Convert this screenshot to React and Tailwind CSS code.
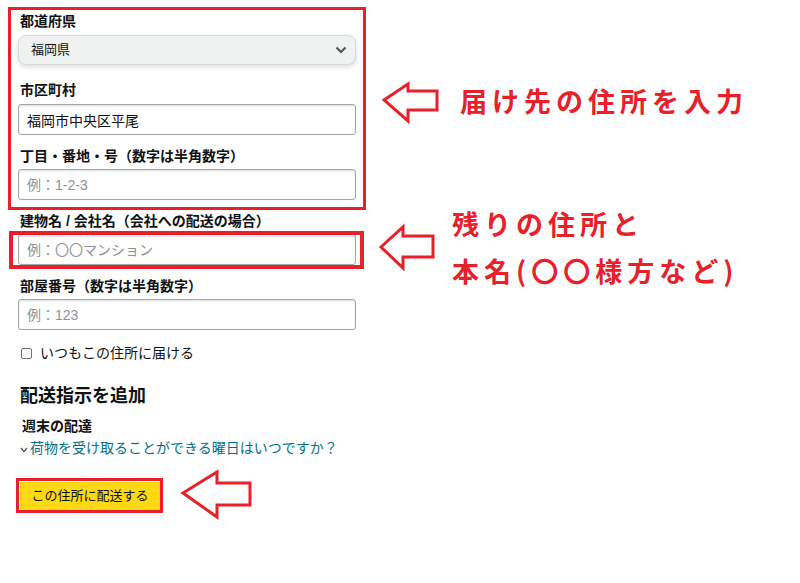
import React from 'react';

const FONT = { fontFamily: '"Liberation Sans", "Noto Sans CJK JP", sans-serif' };
const NOTE_FONT = { fontFamily: '"Noto Sans CJK JP", "Noto Sans", sans-serif' };

const Label = ({ children, className = '' }) => (
  <div className={`text-[14px] leading-[19px] font-bold text-[#0f1111] ${className}`}>{children}</div>
);

const TextInput = ({ value, placeholder }) => (
  <input
    readOnly
    value={value}
    placeholder={placeholder}
    className="block w-full h-[31px] px-2 text-[14px] text-[#0f1111] placeholder:text-[#8d9096] border border-[#a6a6a6] rounded-[3px] shadow-[inset_0_1px_2px_rgba(15,17,17,0.15)] outline-none bg-white"
  />
);

const Arrow = ({ points }) => (
  <polygon points={points} fill="none" stroke="#e8202a" strokeWidth="3" strokeLinejoin="miter" />
);

const App = () => {
  return (
    <div className="relative w-[800px] h-[583px] bg-white overflow-hidden" style={FONT}>
      {/* form */}
      <div className="w-[356px] pl-[18px] pt-[12px]">
        <Label className="pl-[2px] mb-[4px]">都道府県</Label>
        <div className="h-[30px] flex items-center justify-between pl-3 pr-2 rounded-lg bg-[#f0f2f2] border border-[#d5d9d9] shadow-[0_2px_5px_rgba(15,17,17,0.15)]">
          <span className="text-[13px] text-[#0f1111]">福岡県</span>
          <svg width="12" height="8" viewBox="0 0 12 8">
            <path d="M1.5 1.5 L6 6 L10.5 1.5" fill="none" stroke="#555" strokeWidth="2.2" />
          </svg>
        </div>

        <Label className="pl-[2px] mt-[16px] mb-[4px]">市区町村</Label>
        <TextInput value="福岡市中央区平尾" />

        <Label className="pl-[2px] mt-[12px] mb-[3px]">丁目・番地・号（数字は半角数字）</Label>
        <TextInput placeholder="例：1-2-3" />

        <Label className="pl-[2px] mt-[12px] mb-[3px]">建物名 / 会社名（会社への配送の場合）</Label>
        <TextInput placeholder="例：〇〇マンション" />

        <Label className="pl-[2px] mt-[12px] mb-[3px]">部屋番号（数字は半角数字）</Label>
        <TextInput placeholder="例：123" />

        <div className="mt-[14px] flex items-center leading-[19px] text-[14px] text-[#0f1111]">
          <span className="ml-[3px] w-[11px] h-[11px] border border-[#6f7373] rounded-[2px] bg-white" />
          <span className="ml-[8px]">いつもこの住所に届ける</span>
        </div>

        <div className="mt-[21px] pl-[2px] text-[18px] leading-[24px] font-bold text-[#0f1111]">配送指示を追加</div>
        <div className="mt-[9px] pl-[4px] text-[14px] leading-[19px] font-bold text-[#0f1111]">週末の配達</div>
        <div className="mt-[3px] flex items-center text-[14px] leading-[19px] text-[#007185]">
          <svg width="8" height="6" viewBox="0 0 8 6" className="ml-[2px] mr-[2px] mt-[3px]">
            <path d="M1 1 L4 4.5 L7 1" fill="none" stroke="#555" strokeWidth="1.3" />
          </svg>
          <span>荷物を受け取ることができる曜日はいつですか？</span>
        </div>

        <button className="mt-[24px] ml-[2px] w-[140px] h-[28px] bg-[#ffd814] text-[13px] text-[#0f1111] flex items-center justify-center">
          この住所に配送する
        </button>
      </div>

      {/* annotations */}
      <div className="absolute left-[8px] top-[7px] w-[358px] h-[203px] border-[3px] border-[#e8202a]" />
      <div className="absolute left-[9px] top-[231px] w-[355px] h-[38px] border-[4px] border-[#e8202a]" />
      <div className="absolute left-[16px] top-[478px] w-[147px] h-[35px] border-[3px] border-[#e8202a]" />

      <svg className="absolute left-0 top-0" width="800" height="583">
        <Arrow points="384,100 408,84 408,91 437,91 437,110 408,110 408,121" />
        <Arrow points="381,247 403,227 403,236 433,236 433,257 403,257 403,268" />
        <Arrow points="183,493 217,472 217,483 250,483 250,505 217,505 217,517" />
      </svg>

      <div style={NOTE_FONT} className="absolute left-[460px] top-[87px] text-[27px] leading-none font-bold tracking-[5px] text-[#e8202a] whitespace-nowrap">
        届け先の住所を入力
      </div>
      <div style={NOTE_FONT} className="absolute left-[452px] top-[200px] text-[27px] leading-[47px] font-bold tracking-[5px] text-[#e8202a] whitespace-nowrap">
        <div>残りの住所と</div>
        <div>本名(〇〇様方など)</div>
      </div>
    </div>
  );
};

export default App;
